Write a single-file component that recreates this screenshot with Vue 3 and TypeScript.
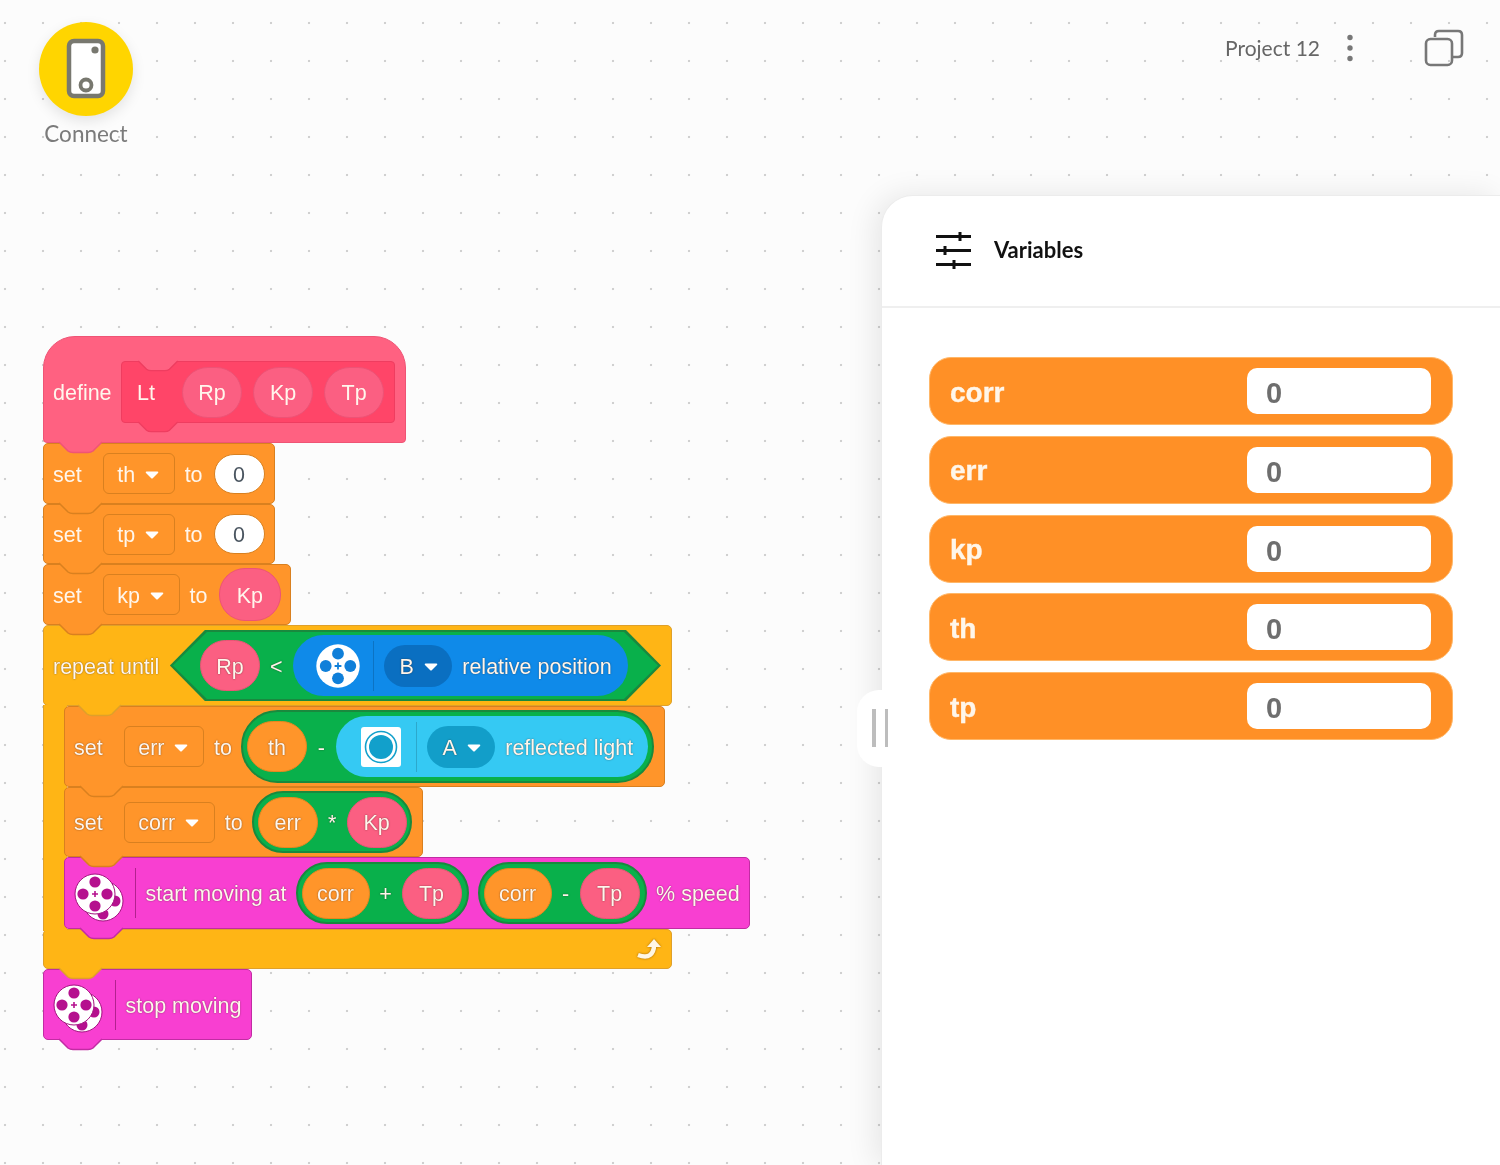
<script setup lang="ts">
interface Variable {
  name: string
  value: number
}

const variables: Variable[] = [
  { name: 'corr', value: 0 },
  { name: 'err', value: 0 },
  { name: 'kp', value: 0 },
  { name: 'th', value: 0 },
  { name: 'tp', value: 0 }
]
</script>

<template>
  <div class="page">
    <svg class="defs" aria-hidden="true">
      <symbol id="bump" viewBox="0 0 43 12" overflow="visible">
        <path stroke="none" d="M0 0 L9 9 Q11 10.5 14 10.5 L29 10.5 Q32 10.5 34 9 L43 0 Z" />
        <path fill="none" d="M0 0 L9 9 Q11 10.5 14 10.5 L29 10.5 Q32 10.5 34 9 L43 0" />
      </symbol>
      <symbol id="caret" viewBox="0 0 14 8">
        <path d="M1.5 0.5 H12.5 Q14 0.5 13 2 L8 7 Q7 8 6 7 L1 2 Q0 0.5 1.5 0.5 Z" fill="#fff" />
      </symbol>
      <symbol id="motors" viewBox="0 0 52 52">
        <circle cx="29" cy="31" r="20" fill="#fff" stroke="#a3117f" stroke-width="1" />
        <circle cx="41" cy="31" r="5.5" fill="#b5108e" />
        <circle cx="29" cy="44" r="5.5" fill="#b5108e" />
        <circle cx="21" cy="24" r="20" fill="#fff" stroke="#a3117f" stroke-width="1" />
        <circle cx="21" cy="12" r="5.6" fill="#b5108e" />
        <circle cx="21" cy="36" r="5.6" fill="#b5108e" />
        <circle cx="9" cy="24" r="5.6" fill="#b5108e" />
        <circle cx="33" cy="24" r="5.6" fill="#b5108e" />
        <path d="M21 21 V27 M18 24 H24" stroke="#b5108e" stroke-width="1.6" />
      </symbol>
    </svg>

    <header class="topbar">
      <div class="connect">
        <div class="connect-btn">
          <svg width="44" height="64" viewBox="0 0 44 64">
            <rect x="5" y="4" width="34" height="55" rx="5" fill="#fff" stroke="#78786f" stroke-width="4.5" />
            <circle cx="31" cy="13" r="3.6" fill="#78786f" />
            <circle cx="22" cy="48" r="5.5" fill="none" stroke="#78786f" stroke-width="3.8" />
          </svg>
        </div>
        <span class="connect-label">Connect</span>
      </div>
      <div class="project">
        <span class="project-name">Project 12</span>
        <svg class="kebab" width="8" height="28" viewBox="0 0 8 28">
          <circle cx="4" cy="3.5" r="2.7" />
          <circle cx="4" cy="14" r="2.7" />
          <circle cx="4" cy="24.5" r="2.7" />
        </svg>
        <svg class="copy" width="40" height="38" viewBox="0 0 40 38" fill="none">
          <path d="M11 8 V6 Q11 2 15 2 H34 Q38 2 38 6 V24 Q38 28 34 28 H28" />
          <rect x="2" y="10" width="26" height="26" rx="4.5" />
        </svg>
      </div>
    </header>

    <main class="main">
      <section class="workspace">
        <div class="stack">
          <div class="blk hat pink">
            <span class="lbl define-lbl">define</span>
            <div class="proto">
              <svg class="proto-dent"><use href="#bump" /></svg>
              <svg class="proto-bump"><use href="#bump" /></svg>
              <span class="lbl lt">Lt</span>
              <span class="pill pill-pink arg">Rp</span>
              <span class="pill pill-pink arg">Kp</span>
              <span class="pill pill-pink arg">Tp</span>
            </div>
            <svg class="bump"><use href="#bump" /></svg>
          </div>

          <div class="blk orange h61">
            <span class="lbl set">set</span>
            <span class="drop">th<svg class="caret"><use href="#caret" /></svg></span>
            <span class="lbl">to</span>
            <span class="pill pill-white">0</span>
            <svg class="bump"><use href="#bump" /></svg>
          </div>
          <div class="blk orange h60">
            <span class="lbl set">set</span>
            <span class="drop">tp<svg class="caret"><use href="#caret" /></svg></span>
            <span class="lbl">to</span>
            <span class="pill pill-white">0</span>
            <svg class="bump"><use href="#bump" /></svg>
          </div>
          <div class="blk orange h61">
            <span class="lbl set">set</span>
            <span class="drop">kp<svg class="caret"><use href="#caret" /></svg></span>
            <span class="lbl">to</span>
            <span class="pill pill-pink big">Kp</span>
            <svg class="bump"><use href="#bump" /></svg>
          </div>

          <div class="loop halo">
            <div class="blk yellow loop-head">
              <span class="lbl">repeat until</span>
              <div class="hex">
                <span class="pill pill-pink">Rp</span>
                <span class="lbl op">&lt;</span>
                <div class="reporter blue">
                  <svg class="wheel" width="44" height="44" viewBox="0 0 44 44">
                    <circle cx="22" cy="22" r="21.7" fill="#fff" />
                    <g fill="#0f7fd9">
                      <circle cx="22" cy="9.7" r="5.9" />
                      <circle cx="22" cy="34.3" r="5.9" />
                      <circle cx="9.7" cy="22" r="5.9" />
                      <circle cx="34.3" cy="22" r="5.9" />
                    </g>
                    <path d="M22 18.6 V25.4 M18.6 22 H25.4" stroke="#0f7fd9" stroke-width="1.8" />
                  </svg>
                  <i class="sep"></i>
                  <span class="drop drop-fill">B<svg class="caret"><use href="#caret" /></svg></span>
                  <span class="lbl">relative position</span>
                </div>
              </div>
              <svg class="bump loop-bump"><use href="#bump" /></svg>
            </div>

            <div class="mouth">
              <div class="arm"></div>
              <div class="inner">
                <div class="blk orange h81">
                  <span class="lbl set">set</span>
                  <span class="drop">err<svg class="caret"><use href="#caret" /></svg></span>
                  <span class="lbl">to</span>
                  <div class="op-pill">
                    <span class="pill pill-orange">th</span>
                    <span class="lbl op">-</span>
                    <div class="reporter cyan">
                      <svg class="sensor" width="40" height="40" viewBox="0 0 40 40">
                        <rect width="40" height="40" rx="3" fill="#fff" />
                        <circle cx="20" cy="20" r="15.5" fill="none" stroke="#12a0cb" stroke-width="1.6" />
                        <circle cx="20" cy="20" r="12" fill="#12a0cb" />
                      </svg>
                      <i class="sep"></i>
                      <span class="drop drop-fill">A<svg class="caret"><use href="#caret" /></svg></span>
                      <span class="lbl">reflected light</span>
                    </div>
                  </div>
                  <svg class="bump"><use href="#bump" /></svg>
                </div>

                <div class="blk orange h70">
                  <span class="lbl set">set</span>
                  <span class="drop">corr<svg class="caret"><use href="#caret" /></svg></span>
                  <span class="lbl">to</span>
                  <div class="op-pill">
                    <span class="pill pill-orange">err</span>
                    <span class="lbl op">*</span>
                    <span class="pill pill-pink">Kp</span>
                  </div>
                  <svg class="bump"><use href="#bump" /></svg>
                </div>

                <div class="blk magenta h72">
                  <svg class="motors" width="52" height="52"><use href="#motors" /></svg>
                  <i class="sep"></i>
                  <span class="lbl">start moving at</span>
                  <div class="op-pill">
                    <span class="pill pill-orange">corr</span>
                    <span class="lbl op op-wide">+</span>
                    <span class="pill pill-pink">Tp</span>
                  </div>
                  <div class="op-pill">
                    <span class="pill pill-orange">corr</span>
                    <span class="lbl op op-tight">-</span>
                    <span class="pill pill-pink">Tp</span>
                  </div>
                  <span class="lbl">% speed</span>
                  <svg class="bump"><use href="#bump" /></svg>
                </div>
              </div>
            </div>

            <div class="blk yellow loop-foot">
              <svg class="loop-arrow" width="26" height="24" viewBox="0 0 26 24">
                <path d="M2 19 Q10 22 14 19 Q18 16 18 9" fill="none" stroke="#fff6e4" stroke-width="4.5" />
                <path d="M11 11 L18 3 L25 11 Z" fill="#fff6e4" />
              </svg>
              <svg class="bump"><use href="#bump" /></svg>
            </div>
          </div>

          <div class="blk magenta stop halo">
            <svg class="motors" width="52" height="52"><use href="#motors" /></svg>
            <i class="sep"></i>
            <span class="lbl">stop moving</span>
            <svg class="bump"><use href="#bump" /></svg>
          </div>
        </div>
      </section>

      <aside class="panel">
        <button class="panel-handle" type="button" aria-label="Resize">
          <i></i><i></i>
        </button>
        <div class="panel-head">
          <svg class="panel-icon" width="36" height="40" viewBox="0 0 36 40" stroke="#111" stroke-width="3" fill="none">
            <path d="M1 6.5 H36 M25 2 V11" />
            <path d="M1 20.5 H36 M10 16 V25" />
            <path d="M1 34.5 H36 M19 30 V39" />
          </svg>
          <span class="panel-title">Variables</span>
        </div>
        <div class="var-list">
          <div v-for="v in variables" :key="v.name" class="var-row">
            <span class="var-name">{{ v.name }}</span>
            <div class="var-value">{{ v.value }}</div>
          </div>
        </div>
      </aside>
    </main>
  </div>
</template>

<style scoped>
.page {
  width: 1500px;
  height: 1165px;
  overflow: hidden;
  display: flex;
  flex-direction: column;
  background-color: #fcfcfc;
  background-image: radial-gradient(circle, #d0d0d0 1px, transparent 1.6px);
  background-size: 38px 38px;
  background-position: -14px 4px;
  filter: blur(0.4px);
}
.defs {
  position: absolute;
  width: 0;
  height: 0;
}

/* top bar */
.topbar {
  height: 195px;
  flex: none;
  box-sizing: border-box;
  padding: 22px 36px 0 39px;
  display: flex;
  justify-content: space-between;
  align-items: flex-start;
}
.connect {
  width: 94px;
  display: flex;
  flex-direction: column;
  align-items: center;
}
.connect-btn {
  width: 94px;
  height: 94px;
  border-radius: 50%;
  background: #ffd500;
  box-shadow: 0 5px 14px rgba(0, 0, 0, 0.1);
  display: flex;
  align-items: center;
  justify-content: center;
}
.connect-label {
  margin-top: 5px;
  font: 400 22.5px/26px Lato, sans-serif;
  color: #7b7b7b;
  white-space: nowrap;
}
.project {
  margin-top: 7px;
  display: flex;
  align-items: center;
  height: 38px;
}
.project-name {
  font: 400 21px/26px Lato, sans-serif;
  color: #666;
}
.kebab {
  margin-left: 26px;
  fill: #777;
}
.copy {
  margin-left: 70px;
  stroke: #777;
  stroke-width: 2.6;
}

/* workspace */
.main {
  flex: 1;
  display: flex;
  min-height: 0;
}
.workspace {
  flex: 1;
  padding: 141px 0 0 43px;
}
.stack {
  display: flex;
  flex-direction: column;
  align-items: flex-start;
  font: 400 21.5px/24px "Liberation Sans", Arial, sans-serif;
  color: #fff;
}

/* blocks */
.blk {
  position: relative;
  box-sizing: border-box;
  display: flex;
  align-items: center;
  gap: 9.5px;
  width: fit-content;
  padding: 0 10px 0 9px;
  background: var(--fill);
  border: 1.5px solid var(--line);
  border-radius: 5px;
  white-space: nowrap;
}
.pink { --fill: #ff6181; --line: #ef5475; }
.orange { --fill: #ff952a; --line: #d9801f; }
.yellow { --fill: #ffb515; --line: #dfa02a; }
.magenta { --fill: #f83fd1; --line: #c12ca3; }
.h60 { height: 60px; }
.h61 { height: 61px; }
.h70 { height: 70px; }
.h72 { height: 72px; }
.h81 { height: 81px; }
.bump {
  position: absolute;
  left: 15px;
  top: 100%;
  width: 43px;
  height: 12px;
  z-index: 2;
  overflow: visible;
  fill: var(--fill);
  stroke: var(--line);
  stroke-width: 1.5;
}
.lbl {
  padding-top: 2px;
  color: #fff6ec;
}
.set {
  margin-right: 12px;
}
.op {
  width: 14px;
  text-align: center;
  flex: none;
}
.op-wide {
  margin: 0 1.5px;
}
.op-tight {
  width: 13px;
}
.halo .lbl,
.halo .pill-orange,
.halo .pill-pink,
.halo .drop {
  text-shadow: 0 0 1.5px rgba(50, 30, 20, 0.7);
}
.motors {
  flex: none;
  margin: 5px -1px 0 0;
}
.magenta .sep {
  margin-left: 0;
  background: rgba(120, 10, 90, 0.55);
}

/* define hat */
.hat {
  width: 363px;
  height: 107px;
  border-radius: 32px 32px 4px 4px;
}
.define-lbl {
  margin-top: 5px;
}
.proto {
  position: relative;
  box-sizing: border-box;
  width: 275px;
  height: 62px;
  margin-top: 5px;
  display: flex;
  align-items: center;
  gap: 11px;
  padding-left: 15px;
  background: #ff4568;
  border: 1.5px solid #ef3d60;
  border-radius: 4px;
}
.proto-dent,
.proto-bump {
  position: absolute;
  left: 16px;
  width: 40px;
  height: 11px;
  overflow: visible;
}
.proto-dent {
  top: -1.5px;
  fill: #ff6181;
  stroke: #ef3d60;
  stroke-width: 1.5;
}
.proto-bump {
  top: 100%;
  fill: #ff4568;
  stroke: #ef3d60;
  stroke-width: 1.5;
}
.lt {
  width: 34px;
}
.arg {
  height: 50px;
}

/* inputs */
.drop {
  box-sizing: border-box;
  height: 41px;
  display: flex;
  align-items: center;
  padding: 2px 15px 0 13px;
  border: 1.5px solid var(--line);
  border-radius: 6px;
  color: #fff6ec;
}
.caret {
  width: 14px;
  height: 8px;
  margin-left: 10px;
  flex: none;
}
.drop-fill {
  border: none;
  border-radius: 22px;
  height: 42px;
  padding: 2px 14.5px 0 15px;
}
.blue .drop-fill {
  background: #0a6fc1;
}
.cyan .drop-fill {
  background: #129ec9;
}
.pill {
  box-sizing: border-box;
  flex: none;
  min-width: 60px;
  height: 51px;
  padding: 2px 14.5px 0;
  display: flex;
  align-items: center;
  justify-content: center;
  border-radius: 26px;
  color: #fff6ec;
}
.pill-pink {
  background: #fb5f82;
  border: 1.5px solid #ed5376;
}
.pill-orange {
  background: #ff952a;
  border: 1.5px solid #e8861f;
}
.pill-white {
  min-width: 51px;
  height: 40px;
  margin: 0 -1px 0 1.5px;
  background: #fff;
  border: 1.5px solid #d9801f;
  color: #4a5560;
  border-radius: 20px;
}
.big {
  width: 62px;
  height: 53px;
  margin: 0 -1px 0 2px;
}

/* boolean and operators */
.hex {
  position: relative;
  box-sizing: border-box;
  height: 71px;
  width: 492px;
  padding-left: 30px;
  display: flex;
  align-items: center;
  gap: 9.5px;
  clip-path: polygon(35px 0, calc(100% - 35px) 0, 100% 50%, calc(100% - 35px) 100%, 35px 100%, 0 50%);
  background: #19893e;
  margin-left: 1px;
}
.hex::before {
  content: '';
  position: absolute;
  inset: 2px 3px;
  background: #09b04b;
  clip-path: polygon(34px 0, calc(100% - 34px) 0, 100% 50%, calc(100% - 34px) 100%, 34px 100%, 0 50%);
}
.hex > * {
  position: relative;
}
.reporter {
  box-sizing: border-box;
  height: 61px;
  display: flex;
  align-items: center;
  gap: 10px;
  padding: 0 15px 0 23px;
  border-radius: 31px;
  flex: none;
}
.blue {
  background: #0f8ae9;
  padding-right: 16px;
}
.blue .sep {
  margin-left: 3px;
}
.cyan {
  background: #35c9f3;
  padding-left: 25px;
}
.sep {
  width: 1.5px;
  height: 50px;
  flex: none;
  margin-left: 5px;
  background: rgba(0, 0, 0, 0.16);
}
.op-pill {
  box-sizing: border-box;
  height: 73px;
  display: flex;
  align-items: center;
  padding: 0 3.5px;
  gap: 7.5px;
  background: #09b04b;
  border: 2.5px solid #19893e;
  border-radius: 37px;
  flex: none;
}
.h70 .op-pill,
.h72 .op-pill {
  height: 62px;
  border-radius: 31px;
}
.h72 .op-pill {
  padding-right: 5px;
}
.h72 {
  padding-right: 9px;
}

/* loop */
.loop {
  display: flex;
  flex-direction: column;
  align-items: flex-start;
}
.loop-head {
  width: 629px;
  height: 81px;
}
.loop-bump {
  left: 34px;
}
.mouth {
  display: flex;
}
.arm {
  position: relative;
  z-index: 1;
  width: 24px;
  margin: -1.5px -3px -1.5px 0;
  box-sizing: border-box;
  background: #ffb515;
  border-left: 1.5px solid #dfa02a;
  flex: none;
}
.inner {
  position: relative;
  z-index: 1;
  display: flex;
  flex-direction: column;
  align-items: flex-start;
}
.loop-foot {
  width: 629px;
  height: 40px;
}
.loop-arrow {
  position: absolute;
  left: 592px;
  top: 6px;
  filter: drop-shadow(0 0 1px rgba(120, 70, 0, 0.7));
}
.stop {
  height: 71px;
}
.stop .sep {
  margin-left: 1px;
}

/* variables panel */
.panel {
  position: relative;
  box-sizing: border-box;
  width: 619px;
  flex: none;
  background: #fff;
  border: 1.5px solid #ececec;
  border-width: 1.5px 0 0 1.5px;
  border-top-left-radius: 32px;
  box-shadow: -6px 0 30px rgba(0, 0, 0, 0.09);
}
.panel-handle {
  position: absolute;
  left: -25px;
  top: 494px;
  width: 30px;
  height: 77px;
  border: none;
  border-radius: 22px 0 0 22px;
  background: #fff;
  display: flex;
  justify-content: flex-start;
  gap: 9px;
  padding: 19px 0 0 15px;
}
.panel-handle i {
  width: 3.5px;
  height: 38px;
  background: #bdbdbd;
  flex: none;
}
.panel-head {
  box-sizing: border-box;
  height: 112px;
  display: flex;
  align-items: center;
  gap: 23px;
  padding-left: 53px;
  border-bottom: 2px solid #efefef;
}
.panel-icon {
  margin-top: -2px;
}
.panel-title {
  margin-top: -3px;
  font: 700 22px/28px Lato, sans-serif;
  color: #111;
}
.var-list {
  display: flex;
  flex-direction: column;
  gap: 10.75px;
  padding: 49px 47px 0 46.5px;
}
.var-row {
  box-sizing: border-box;
  height: 68px;
  display: flex;
  align-items: center;
  justify-content: space-between;
  padding: 0 21px 0 20.5px;
  background: #ff9026;
  border: 1.5px solid #ffb768;
  border-radius: 22px;
}
.var-name {
  padding-top: 3px;
  font: 700 28px/34px "Liberation Sans", Arial, sans-serif;
  -webkit-text-stroke: 0.4px #fff6ea;
  color: #fff6ea;
}
.var-value {
  box-sizing: border-box;
  width: 184px;
  height: 46px;
  padding-left: 19px;
  background: #fff;
  border-radius: 10px;
  font: 700 29px/50px "Liberation Sans", Arial, sans-serif;
  color: #6e6e6e;
}
</style>
